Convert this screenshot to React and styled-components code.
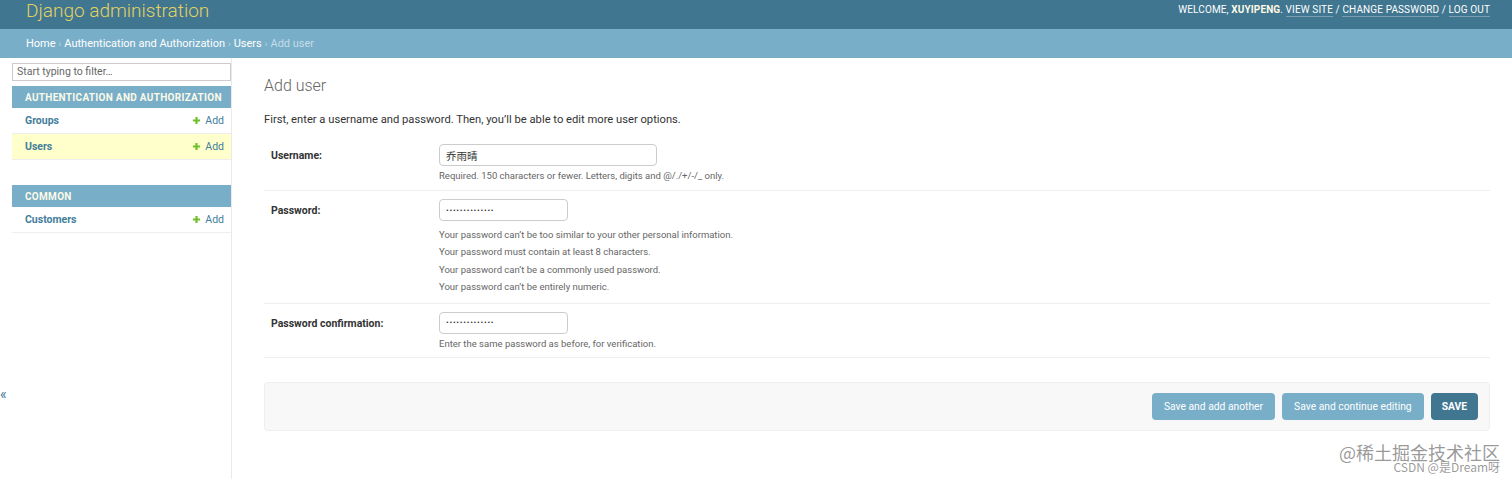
import React from "react";
import styled, { createGlobalStyle } from "styled-components";

const GlobalStyle = createGlobalStyle`
    html, body {
        margin: 0;
        padding: 0;
        background: #fff;
    }
    body {
        font-family: Roboto, "Liberation Sans", "Noto Sans CJK SC", sans-serif;
        color: #333;
    }
    * { box-sizing: border-box; }
`

const Page = styled.div`
    position: relative;
    height: 479px;
    display: flex;
    flex-direction: column;
    overflow: hidden;
`, Header = styled.header`
    height: 29px;
    flex: none;
    background: #417690;
    display: flex;
    justify-content: space-between;
    align-items: flex-start;
    padding: 0 22px 0 26px;
`, Branding = styled.h1`
    margin: 0;
    font-size: 19px;
    line-height: 21px;
    font-weight: 300;
    color: #f5dd5d;
    opacity: 0.9;
`, UserTools = styled.div`
    font-size: 10px;
    line-height: 20px;
    letter-spacing: 0.12px;
    color: #fff;
    text-transform: uppercase;
    & strong { font-weight: 700; color: #fdfae6; }
`, ToolLink = styled.span`
    border-bottom: 1px solid rgba(255, 255, 255, 0.3);
    padding-bottom: 1px;
`, Crumbs = styled.nav`
    height: 29px;
    flex: none;
    background: #79aec8;
    display: flex;
    align-items: center;
    padding: 0 26px;
    font-size: 11px;
    color: #c4dce8;
    & b { font-weight: 400; color: #fff; }
    & i { font-style: normal; margin: 0 3px; color: #c4dce8; font-size: 9px; }
`, Main = styled.div`
    flex: 1;
    display: flex;
`, Toggle = styled.div`
    width: 12px;
    flex: none;
    padding-top: 329px;
    font-size: 14px;
    color: #417690;
    line-height: 14px;
`, Sidebar = styled.aside`
    width: 220px;
    flex: none;
    border-right: 1px solid #eaeaea;
    padding-top: 5px;
`, Filter = styled.div`
    height: 18px;
    margin: 0 0 5px;
    border: 1px solid #ccc;
    font-size: 10.5px;
    line-height: 16px;
    padding-left: 4px;
    color: #666;
`, Module = styled.div`
    margin-bottom: 25px;
`, Caption = styled.div`
    height: 22px;
    background: #79aec8;
    color: #fbfae8;
    font-size: 10px;
    font-weight: 700;
    letter-spacing: 0.3px;
    white-space: nowrap;
    padding-left: 13px;
    display: flex;
    align-items: center;
    text-transform: uppercase;
`, NavRow = styled.div`
    height: 26px;
    display: flex;
    align-items: center;
    justify-content: space-between;
    padding: 0 7px 0 13px;
    border-bottom: 1px solid #eee;
    background: ${p => p.$current ? "#ffffcc" : "#fff"};
    font-size: 10.5px;
`, NavName = styled.span`
    font-weight: 700;
    color: #447e9b;
`, AddLink = styled.span`
    color: #447e9b;
    display: flex;
    align-items: center;
    gap: 4px;
`, Content = styled.main`
    flex: 1;
    padding: 18px 22px 0 32px;
`, Title = styled.h2`
    margin: 0 0 18px;
    font-size: 16px;
    font-weight: 300;
    color: #666;
`, Intro = styled.p`
    margin: 0 0 10px;
    font-size: 11.2px;
    color: #333;
`, FormRow = styled.div`
    display: flex;
    padding: 8px 7px ${p => p.$pb || 6}px;
    border-bottom: 1px solid #eee;
`, Label = styled.label`
    width: 168px;
    flex: none;
    font-size: 10.5px;
    font-weight: 700;
    color: #333;
    padding-top: 5px;
`, Field = styled.div`
    display: flex;
    flex-direction: column;
`, Input = styled.div`
    width: ${p => p.$w}px;
    height: 22px;
    border: 1px solid #ccc;
    border-radius: 4px;
    padding: 0 6px;
    display: flex;
    align-items: center;
    font-size: 10.5px;
    color: #333;
`, Dots = styled.span`
    font-size: 8px;
    letter-spacing: 0.75px;
    color: #333;
`, Help = styled.div`
    margin-top: 4px;
    font-size: 9.5px;
    color: #666;
    line-height: 12px;
`, HelpList = styled.ul`
    margin: 8px 0 0;
    padding: 0;
    list-style: none;
    & li {
        font-size: 9.5px;
        color: #666;
        line-height: 12px;
        margin-bottom: 5.3px;
    }
    & li:last-child { margin-bottom: 0; }
`, SubmitRow = styled.div`
    margin-top: 24px;
    height: 49px;
    background: #f8f8f8;
    border: 1px solid #eee;
    border-radius: 4px;
    display: flex;
    justify-content: flex-end;
    align-items: center;
    gap: 7px;
    padding: 0 11px;
`, Button = styled.div`
    height: 27px;
    padding: 0 ${p => p.$main ? 11 : 12}px;
    border-radius: 4px;
    background: ${p => p.$main ? "#417690" : "#79aec8"};
    color: #fff;
    font-size: 10.3px;
    font-weight: ${p => p.$main ? 700 : 400};
    display: flex;
    align-items: center;
`, Watermark = styled.div`
    position: absolute;
    right: 12px;
    bottom: 6px;
    color: rgba(120, 120, 120, 0.75);
    text-align: right;
    font-family: "Noto Sans CJK SC", "Liberation Sans", sans-serif;
    & div:first-child { font-size: 18px; line-height: 18px; }
    & div:last-child { font-size: 12px; line-height: 12px; }
`

function Plus() {
    return (
        <svg width="9" height="9" viewBox="0 0 10 10">
            <path d="M5 1v8M1 5h8" stroke="#70bf2b" strokeWidth="2.4" />
        </svg>
    )
}

const modules = [
    { caption: "Authentication and Authorization", rows: [{ name: "Groups" }, { name: "Users", current: true }] },
    { caption: "Common", rows: [{ name: "Customers" }] },
]

const pwHelp = [
    "Your password can’t be too similar to your other personal information.",
    "Your password must contain at least 8 characters.",
    "Your password can’t be a commonly used password.",
    "Your password can’t be entirely numeric.",
]

export default function App() {
    return (
        <Page>
            <GlobalStyle />
            <Header>
                <Branding>Django administration</Branding>
                <UserTools>
                    Welcome, <strong>xuyipeng</strong>. <ToolLink>View site</ToolLink> / <ToolLink>Change password</ToolLink> / <ToolLink>Log out</ToolLink>
                </UserTools>
            </Header>
            <Crumbs>
                <b>Home</b><i>›</i><b>Authentication and Authorization</b><i>›</i><b>Users</b><i>›</i>Add user
            </Crumbs>
            <Main>
                <Toggle>«</Toggle>
                <Sidebar>
                    <Filter>Start typing to filter…</Filter>
                    {modules.map(m => (
                        <Module key={m.caption}>
                            <Caption>{m.caption}</Caption>
                            {m.rows.map(r => (
                                <NavRow key={r.name} $current={r.current}>
                                    <NavName>{r.name}</NavName>
                                    <AddLink><Plus />Add</AddLink>
                                </NavRow>
                            ))}
                        </Module>
                    ))}
                </Sidebar>
                <Content>
                    <Title>Add user</Title>
                    <Intro>First, enter a username and password. Then, you’ll be able to edit more user options.</Intro>
                    <FormRow $pb={8}>
                        <Label>Username:</Label>
                        <Field>
                            <Input $w={218}>乔雨晴</Input>
                            <Help>Required. 150 characters or fewer. Letters, digits and @/./+/-/_ only.</Help>
                        </Field>
                    </FormRow>
                    <FormRow $pb={10}>
                        <Label>Password:</Label>
                        <Field>
                            <Input $w={129}><Dots>••••••••••••••</Dots></Input>
                            <HelpList>
                                {pwHelp.map(t => <li key={t}>{t}</li>)}
                            </HelpList>
                        </Field>
                    </FormRow>
                    <FormRow $pb={7}>
                        <Label>Password confirmation:</Label>
                        <Field>
                            <Input $w={129}><Dots>••••••••••••••</Dots></Input>
                            <Help>Enter the same password as before, for verification.</Help>
                        </Field>
                    </FormRow>
                    <SubmitRow>
                        <Button>Save and add another</Button>
                        <Button>Save and continue editing</Button>
                        <Button $main>SAVE</Button>
                    </SubmitRow>
                </Content>
            </Main>
            <Watermark>
                <div>@稀土掘金技术社区</div>
                <div>CSDN @是Dream呀</div>
            </Watermark>
        </Page>
    )
}
